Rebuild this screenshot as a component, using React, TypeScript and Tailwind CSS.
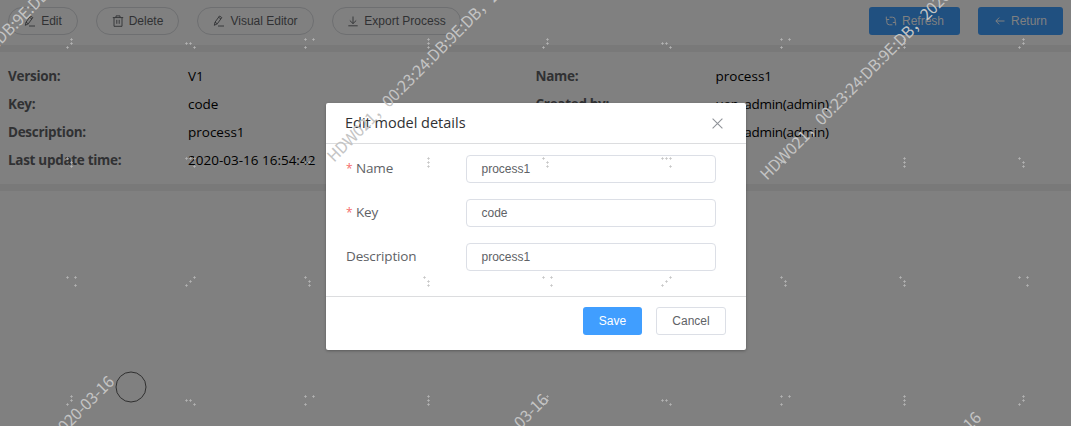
import React from "react";

const dotColumns: number[][][][] = [
  [[[67, 47], [71, 39], [71, 43]], [[186, 43], [190, 43], [194, 47]], [[305, 39], [313, 39], [305, 47]], [[428, 39], [428, 43], [428, 47]]],
  [[[67, 158], [71, 162], [71, 166]], [[186, 158], [190, 158], [194, 158], [194, 166]], [[305, 162], [309, 162]], [[428, 158], [428, 162], [428, 166]]],
  [[[67, 277], [75, 277], [75, 285]], [[194, 277], [190, 281], [186, 285]], [[305, 277], [309, 281], [309, 285]], [[424, 277], [428, 281], [428, 285]]],
  [[[67, 404], [71, 396], [71, 400]], [[186, 400], [190, 400], [194, 404]], [[305, 396], [313, 396], [305, 404]], [[428, 396], [428, 400], [428, 404]]],
];
const dots = dotColumns.flat(2).flatMap(([x, y]) => [0, 476, 952].map((o) => [x + o, y])).filter(([x]) => x < 1071);

const MARK = "HDW021，00:23:24:DB:9E:DB，2020-03-16";
const marks = [[-99, 145], [334, 163], [767, 181], [-101, 599], [333, 617], [766, 635]];

const Pen = () => (
  <svg width="12" height="12" viewBox="0 0 12 12" fill="none" stroke="currentColor" strokeWidth="0.9">
    <path d="M1.3 10.3 2 7.2 6.5 1 8.8 2.6 4.3 8.8ZM5.6 2.3 7.9 3.9M2 7.2 4.3 8.8M5 11h6" />
  </svg>
);
const Trash = () => (
  <svg width="12" height="12" viewBox="0 0 12 12" fill="none" stroke="currentColor" strokeWidth="0.9">
    <path d="M.8 2.6h10.4M4 2.5V.9h4v1.6M2 2.8v8.5h8V2.8M4.8 4.8v4M7.2 4.8v4" />
  </svg>
);
const Download = () => (
  <svg width="12" height="12" viewBox="0 0 12 12" fill="none" stroke="currentColor" strokeWidth="0.9">
    <path d="M6 1.5v7M2.8 5.5 6 8.6l3.2-3.1M1.3 10.8h9.4" />
  </svg>
);
const Refresh = () => (
  <svg width="12" height="12" viewBox="0 0 12 12" fill="none" stroke="currentColor" strokeWidth="1">
    <path d="M4.6 2.2h3a2.6 2.6 0 0 1 2.6 2.6v2.6M1.8 4.6v2.6a2.6 2.6 0 0 0 2.6 2.6h3M1.3 1.6v2.9h2.9M10.7 10.4V7.5H7.8" />
  </svg>
);
const Back = () => (
  <svg width="12" height="12" viewBox="0 0 12 12" fill="none" stroke="currentColor" strokeWidth="1">
    <path d="M10.5 6H2M5.2 2.6 1.8 6l3.4 3.4" />
  </svg>
);

const arial = "font-['Liberation_Sans',Arial,sans-serif]";

function Pill({ icon, label, className }: { icon: React.ReactNode; label: string; className: string }) {
  return (
    <button className={`flex h-7 shrink-0 items-center justify-center gap-[5px] rounded-full border border-[#6e6f71] text-[12px] text-[#303133] ${arial} ${className}`}>
      {icon}
      <span>{label}</span>
    </button>
  );
}

function Action({ icon, label, className }: { icon: React.ReactNode; label: string; className: string }) {
  return (
    <button className={`flex h-7 shrink-0 items-center justify-center gap-[5px] rounded-[3px] bg-[#205080] text-[12px] text-[#808080] ${arial} ${className}`}>
      {icon}
      <span>{label}</span>
    </button>
  );
}

function Detail({ label, value, tight }: { label: string; value: string; tight?: boolean }) {
  return (
    <div className="flex h-7 items-center whitespace-nowrap text-[13.5px]">
      <div className="w-[180px] font-bold tracking-[-0.3px] text-[#303133]">{label}</div>
      <div className={tight ? "tracking-[-0.3px] text-black" : "text-black"}>{value}</div>
    </div>
  );
}

function Field({ label, value, required }: { label: string; value: string; required?: boolean }) {
  return (
    <div className="flex h-7 items-center">
      <label className="w-[120px] pb-[2px] text-[13.5px] tracking-[-0.15px] text-[#606266]">
        {required && <span className="mr-1 inline-block w-[6px] text-[12px] text-[#f56c6c]">*</span>}
        {label}
      </label>
      <div className={`flex h-7 w-[250px] items-center rounded-[4px] border border-[#dcdfe6] px-[14.5px] text-[12px] text-[#606266] ${arial}`}>
        {value}
      </div>
    </div>
  );
}

export default function App() {
  return (
    <div className="relative h-[426px] w-[1071px] overflow-hidden bg-[#808080] font-['Open_Sans','Noto_Sans_CJK_SC',sans-serif]">
      <div className="flex h-[45px] items-start pt-[7px] pl-2">
        <Pill icon={<Pen />} label="Edit" className="w-[70px]" />
        <Pill icon={<Trash />} label="Delete" className="ml-[18px] w-[83px]" />
        <Pill icon={<Pen />} label="Visual Editor" className="ml-[18px] w-[117px]" />
        <Pill icon={<Download />} label="Export Process" className="ml-[18px] w-[129px]" />
        <div className="ml-auto flex gap-[18px] pr-2">
          <Action icon={<Refresh />} label="Refresh" className="w-[91px]" />
          <Action icon={<Back />} label="Return" className="w-[85px]" />
        </div>
      </div>
      <div className="h-[7px] bg-[#797979]" />
      <div className="grid h-[132px] grid-cols-[527.5px_1fr] px-2 pt-[10px]">
        <div>
          <Detail label="Version:" value="V1" />
          <Detail label="Key:" value="code" />
          <Detail label="Description:" value="process1" />
          <Detail label="Last update time:" value="2020-03-16 16:54:42" />
        </div>
        <div>
          <Detail label="Name:" value="process1" />
          <Detail label="Created by:" value="uep_admin(admin)" tight />
          <Detail label="Updated by:" value="uep_admin(admin)" tight />
        </div>
      </div>
      <div className="h-[7px] bg-[#797979]" />
      <svg className="absolute top-[371px] left-[115px]" width="32" height="32" fill="none">
        <circle cx="16" cy="16" r="15" stroke="#303030" />
      </svg>

      <div className="absolute top-[103px] left-[326px] flex h-[247px] w-[420px] flex-col rounded-[2px] bg-white shadow-[0_1px_3px_rgba(0,0,0,0.3)]">
        <div className="flex h-[41px] items-center justify-between border-b border-[#dcdddf] pr-[23px] pl-[19px]">
          <span className="pb-[1px] text-[14.5px] text-[#303133]">Edit model details</span>
          <svg width="11" height="11" viewBox="0 0 11 11" stroke="#909399" strokeWidth="1.1">
            <path d="M.6.6l9.8 9.8M10.4.6.6 10.4" />
          </svg>
        </div>
        <div className="flex h-[152px] flex-col gap-4 pt-[11px] pl-5">
          <Field label="Name" value="process1" required />
          <Field label="Key" value="code" required />
          <Field label="Description" value="process1" />
        </div>
        <div className={`flex flex-1 items-start justify-end gap-[14px] border-t border-[#dcdddf] pt-[10px] pr-5 text-[12px] ${arial}`}>
          <button className="h-7 w-[59px] rounded-[3px] bg-[#409eff] text-white">Save</button>
          <button className="h-7 w-[70px] rounded-[3px] border border-[#dcdfe6] text-[#606266]">Cancel</button>
        </div>
      </div>

      <svg className="pointer-events-none absolute inset-0" width="1071" height="426">
        {dots.map(([x, y], i) => (
          <path key={i} d={`M${x - 1} ${y + 0.5}h3M${x + 0.5} ${y - 1}v3`} stroke="#bcbcbc" strokeOpacity="0.6" />
        ))}
        {marks.map(([x, y], i) => (
          <text key={i} transform={`translate(${x} ${y}) rotate(-45)`} fill="#c4c4c4" className="font-['Noto_Sans_CJK_SC',sans-serif] text-[16px] tracking-[-0.25px]">
            {MARK}
          </text>
        ))}
      </svg>
    </div>
  );
}
